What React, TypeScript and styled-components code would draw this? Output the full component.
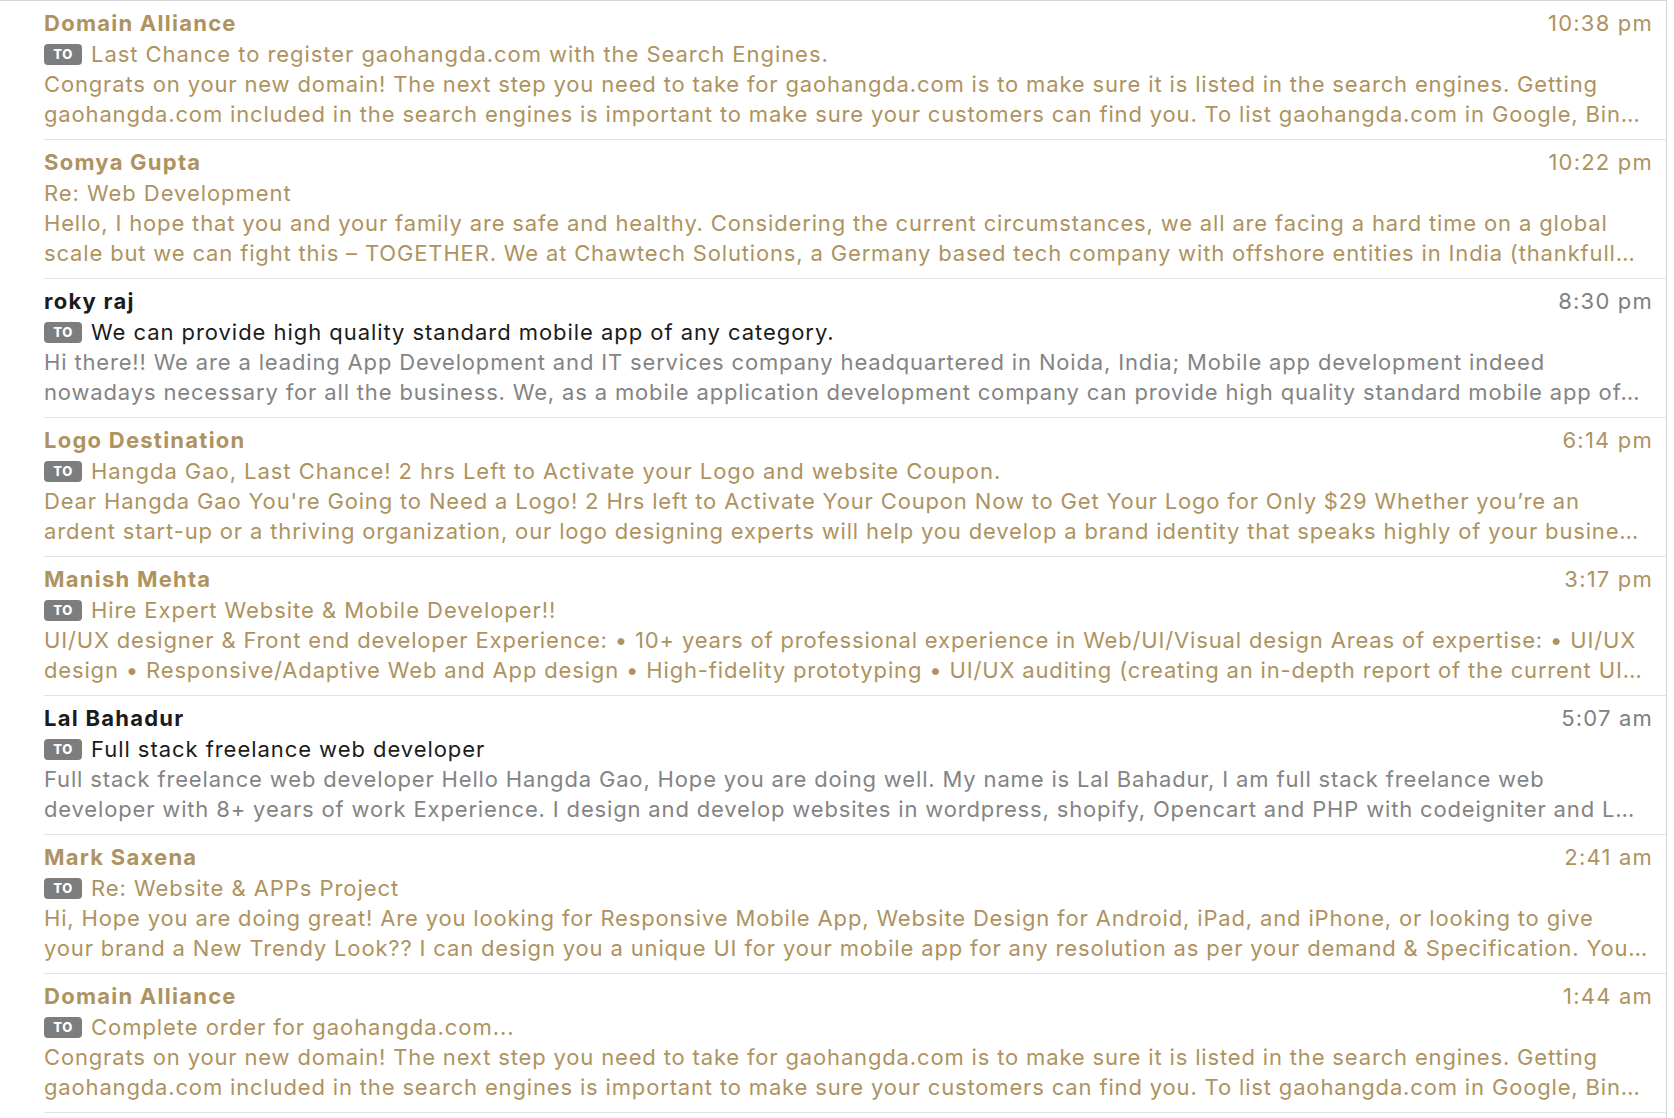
import React from "react";
import styled, { createGlobalStyle } from "styled-components";

const Global = createGlobalStyle`
  html, body { margin: 0; padding: 0; background: #ffffff; }
  body { font-family: Inter, "Noto Sans", "Liberation Sans", sans-serif; -webkit-font-smoothing: antialiased; }
`;

type Mail = {
  from: string;
  time: string;
  unread: boolean;
  to: boolean;
  subject: string;
  lines: [string, string];
};

const GOLD = "#ae9360";

const mails: Mail[] = [
  {
    from: "Domain Alliance",
    time: "10:38 pm",
    unread: true,
    to: true,
    subject: "Last Chance to register gaohangda.com with the Search Engines.",
    lines: [
      "Congrats on your new domain! The next step you need to take for gaohangda.com is to make sure it is listed in the search engines. Getting",
      "gaohangda.com included in the search engines is important to make sure your customers can find you. To list gaohangda.com in Google, Bin…",
    ],
  },
  {
    from: "Somya Gupta",
    time: "10:22 pm",
    unread: true,
    to: false,
    subject: "Re: Web Development",
    lines: [
      "Hello, I hope that you and your family are safe and healthy. Considering the current circumstances, we all are facing a hard time on a global",
      "scale but we can fight this – TOGETHER. We at Chawtech Solutions, a Germany based tech company with offshore entities in India (thankfull…",
    ],
  },
  {
    from: "roky raj",
    time: "8:30 pm",
    unread: false,
    to: true,
    subject: "We can provide high quality standard mobile app of any category.",
    lines: [
      "Hi there!! We are a leading App Development and IT services company headquartered in Noida, India; Mobile app development indeed",
      "nowadays necessary for all the business. We, as a mobile application development company can provide high quality standard mobile app of…",
    ],
  },
  {
    from: "Logo Destination",
    time: "6:14 pm",
    unread: true,
    to: true,
    subject: "Hangda Gao, Last Chance! 2 hrs Left to Activate your Logo and website Coupon.",
    lines: [
      "Dear Hangda Gao You're Going to Need a Logo! 2 Hrs left to Activate Your Coupon Now to Get Your Logo for Only $29 Whether you’re an",
      "ardent start-up or a thriving organization, our logo designing experts will help you develop a brand identity that speaks highly of your busine…",
    ],
  },
  {
    from: "Manish Mehta",
    time: "3:17 pm",
    unread: true,
    to: true,
    subject: "Hire Expert Website & Mobile Developer!!",
    lines: [
      "UI/UX designer & Front end developer Experience: • 10+ years of professional experience in Web/UI/Visual design Areas of expertise: • UI/UX",
      "design • Responsive/Adaptive Web and App design • High-fidelity prototyping • UI/UX auditing (creating an in-depth report of the current UI…",
    ],
  },
  {
    from: "Lal Bahadur",
    time: "5:07 am",
    unread: false,
    to: true,
    subject: "Full stack freelance web developer",
    lines: [
      "Full stack freelance web developer Hello Hangda Gao, Hope you are doing well. My name is Lal Bahadur, I am full stack freelance web",
      "developer with 8+ years of work Experience. I design and develop websites in wordpress, shopify, Opencart and PHP with codeigniter and L…",
    ],
  },
  {
    from: "Mark Saxena",
    time: "2:41 am",
    unread: true,
    to: true,
    subject: "Re: Website & APPs Project",
    lines: [
      "Hi, Hope you are doing great! Are you looking for Responsive Mobile App, Website Design for Android, iPad, and iPhone, or looking to give",
      "your brand a New Trendy Look?? I can design you a unique UI for your mobile app for any resolution as per your demand & Specification. You…",
    ],
  },
  {
    from: "Domain Alliance",
    time: "1:44 am",
    unread: true,
    to: true,
    subject: "Complete order for gaohangda.com...",
    lines: [
      "Congrats on your new domain! The next step you need to take for gaohangda.com is to make sure it is listed in the search engines. Getting",
      "gaohangda.com included in the search engines is important to make sure your customers can find you. To list gaohangda.com in Google, Bin…",
    ],
  },
];

const List = styled.div`
  width: 1667px;
  height: 1118px;
  box-sizing: border-box;
  border-top: 1px solid #d6d6d6;
  border-right: 1px solid #d2d2d2;
  overflow: hidden;
  background: #ffffff;
`;

const Item = styled.div`
  padding-left: 44px;
`;

const ItemBody = styled.div`
  height: 139px;
  box-sizing: border-box;
  padding: 7px 13px 0 0;
  border-bottom: 1px solid #e3e3e3;
  display: flex;
  flex-direction: column;
`;

const Head = styled.div`
  display: flex;
  justify-content: space-between;
  align-items: baseline;
  height: 31px;
  line-height: 31px;
`;

const Sender = styled.span<{ $unread: boolean }>`
  font-size: 22px;
  font-weight: 700;
  color: ${(p) => (p.$unread ? GOLD : "#1b1b1b")};
  letter-spacing: 1.25px;
`;

const Time = styled.span<{ $unread: boolean }>`
  font-size: 22px;
  font-weight: 400;
  letter-spacing: 1.2px;
  color: ${(p) => (p.$unread ? GOLD : "#808080")};
`;

const SubjectRow = styled.div`
  display: flex;
  align-items: center;
  gap: 9px;
  height: 30px;
`;

const Badge = styled.span`
  display: inline-flex;
  align-items: center;
  justify-content: center;
  width: 38px;
  height: 21px;
  border-radius: 4px;
  background: #7d7d7d;
  color: #ffffff;
  font-size: 13px;
  font-weight: 800;
  letter-spacing: 0.6px;
  flex: none;
`;

const Subject = styled.span<{ $unread: boolean }>`
  font-size: 22px;
  letter-spacing: 0.95px;
  color: ${(p) => (p.$unread ? GOLD : "#1b1b1b")};
  white-space: nowrap;
  line-height: 30px;
`;

const Preview = styled.div<{ $unread: boolean }>`
  font-size: 22px;
  letter-spacing: 0.84px;
  line-height: 30px;
  color: ${(p) => (p.$unread ? GOLD : "#848484")};
  white-space: nowrap;
`;

export default function App() {
  return (
    <>
      <Global />
      <List>
        {mails.map((m, i) => (
          <Item key={i}>
            <ItemBody>
              <Head>
                <Sender $unread={m.unread}>{m.from}</Sender>
                <Time $unread={m.unread}>{m.time}</Time>
              </Head>
              <SubjectRow>
                {m.to && <Badge>TO</Badge>}
                <Subject $unread={m.unread}>{m.subject}</Subject>
              </SubjectRow>
              <Preview $unread={m.unread}>{m.lines[0]}</Preview>
              <Preview $unread={m.unread}>{m.lines[1]}</Preview>
            </ItemBody>
          </Item>
        ))}
      </List>
    </>
  );
}
